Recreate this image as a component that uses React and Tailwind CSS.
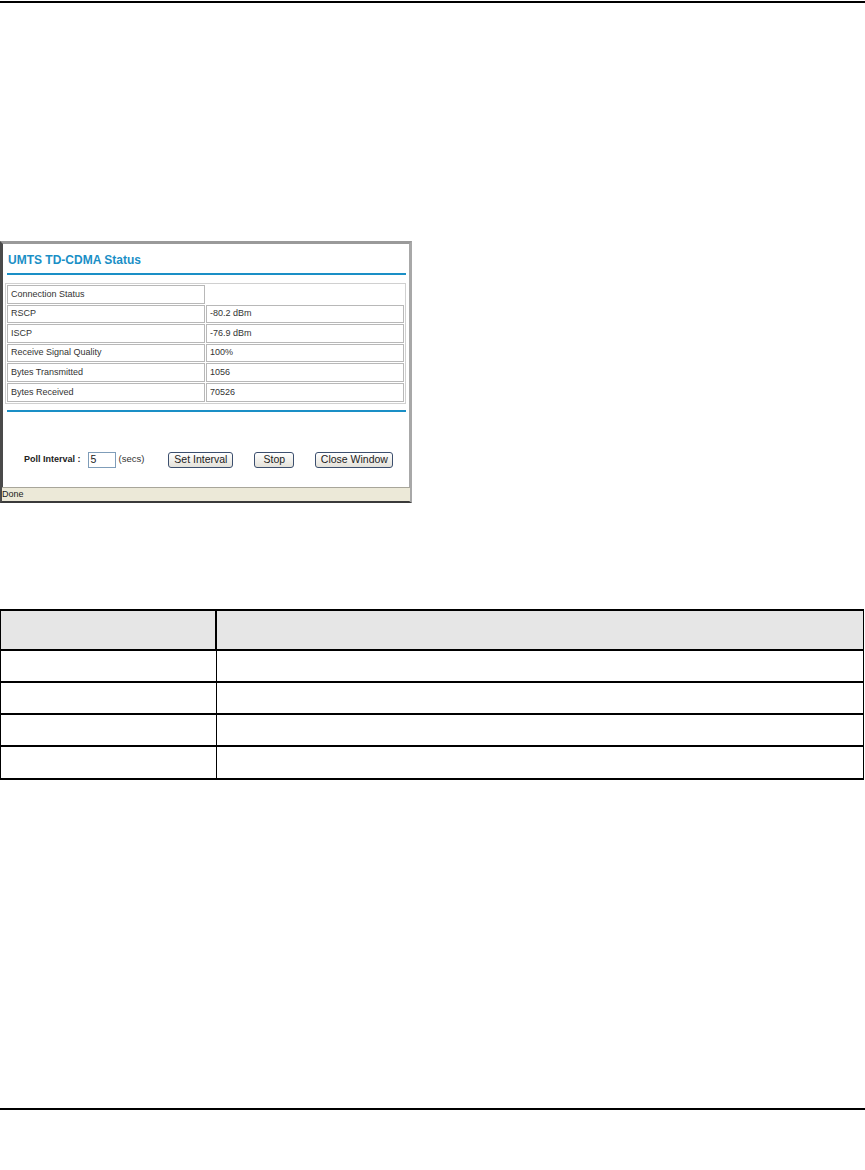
import React from "react";

const rows = [
  ["Connection Status", ""],
  ["RSCP", "-80.2 dBm"],
  ["ISCP", "-76.9 dBm"],
  ["Receive Signal Quality", "100%"],
  ["Bytes Transmitted", "1056"],
  ["Bytes Received", "70526"],
];

function Btn({ children, w }) {
  return (
    <div
      className={`h-[16px] ${w} flex items-center justify-center rounded-[3px] border border-[#3c4f6e] bg-gradient-to-b from-[#ffffff] to-[#e4e2da] text-[10.5px] text-[#222]`}
    >
      {children}
    </div>
  );
}

export default function App() {
  return (
    <div className="w-[865px] h-[1170px] bg-white relative" style={{ fontFamily: '"Liberation Sans", Arial, sans-serif' }}>
      <div className="pt-[1px]">
        <div className="h-[2px] bg-black w-full" />
      </div>

      {/* status window screenshot */}
      <div className="mt-[238px] ml-0 w-[412px] h-[262px] flex flex-col border-l-[3px] border-l-[#4a4a4a] border-t-[3px] border-t-[#9a9a9a] border-r-[3px] border-r-[#a8a8a8] border-b-[2px] border-b-[#3a3a3a] bg-white">
        <div className="flex-1 flex flex-col pl-[4px] pr-[3px]">
          <div className="h-[31px] flex items-center pl-[1px] pt-[2px] border-b-[2px] border-[#1a8fc6]">
            <span className="text-[12px] font-bold text-[#1a8fc6]">UMTS TD-CDMA Status</span>
          </div>
          <div className="mt-[8px] ml-[-2px] border border-[#d0d0d0] p-[1px] flex flex-col gap-[1px]">
            {rows.map(([a, b], i) => (
              <div key={i} className="flex gap-[1px] h-[18.6px]">
                <div className="w-[198px] border border-[#b8b8b8] flex items-center pl-[3px] text-[9px] text-[#333]">{a}</div>
                <div className={`flex-1 flex items-center pl-[3px] text-[9px] text-[#333] ${b ? "border border-[#b8b8b8]" : ""}`}>{b}</div>
              </div>
            ))}
          </div>
          <div className="mt-[6px] h-[2px] bg-[#1a8fc6]" />
          <div className="flex items-center mt-[40px] h-[16px]">
            <span className="ml-[17px] text-[9px] font-bold text-[#222]">Poll Interval :</span>
            <div className="ml-[7px] w-[28px] h-[16px] border border-[#7f9db9] flex items-center pl-[2px] text-[10.5px] text-[#222]">5</div>
            <span className="ml-[3px] text-[9.5px] text-[#333]">(secs)</span>
            <div className="ml-[24px]"><Btn w="w-[65px]">Set Interval</Btn></div>
            <div className="ml-[21px]"><Btn w="w-[40px]">Stop</Btn></div>
            <div className="ml-[21px]"><Btn w="w-[78px]">Close Window</Btn></div>
          </div>
        </div>
        <div className="h-[14px] bg-[#ece9d8] border-t border-[#a8a69a] flex items-center text-[9px] text-[#222] mx-[-1px]">
          Done
        </div>
      </div>

      {/* description table */}
      <div className="mt-[106px] w-[864px] border-t-[2px] border-b-[2px] border-black border-r border-l">
        <div className="flex h-[40px] bg-[#e6e6e6] border-b-[2px] border-black">
          <div className="w-[216px] border-r-[2px] border-black" />
          <div className="flex-1" />
        </div>
        {[0, 1, 2, 3].map((i) => (
          <div key={i} className={`flex ${i < 3 ? "h-[32px] border-b-[2px] border-black" : "h-[31px]"}`}>
            <div className="w-[216px] border-r border-black" />
            <div className="flex-1" />
          </div>
        ))}
      </div>

      <div className="mt-[328px] h-[2px] bg-black w-full" />
    </div>
  );
}
